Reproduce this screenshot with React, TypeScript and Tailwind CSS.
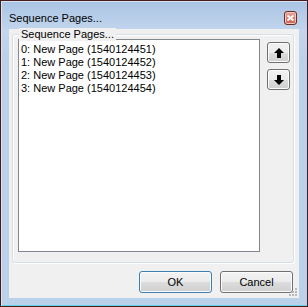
import React from "react";

const pages = [
  "0: New Page (1540124451)",
  "1: New Page (1540124452)",
  "2: New Page (1540124453)",
  "3: New Page (1540124454)",
];

const btn =
  "flex items-center justify-center rounded-[3px] border bg-[linear-gradient(#f2f2f2_0%,#ebebeb_50%,#dddddd_51%,#cfcfcf_100%)] shadow-[inset_0_0_0_1px_#fcfcfc]";

const Arrow = ({ down }: { down?: boolean }) => (
  <svg width="10" height="10" viewBox="0 0 10 10" className={down ? "rotate-180" : ""}>
    <polygon points="5,0 10,5 7,5 7,10 3,10 3,5 0,5" fill="#000" />
  </svg>
);

const SizeGrip = () => (
  <svg width="8" height="8" viewBox="0 0 8 8" className="absolute bottom-[2px] right-[2px]">
    {[
      [6, 0],
      [6, 3],
      [3, 3],
      [6, 6],
      [3, 6],
      [0, 6],
    ].map(([x, y]) => (
      <rect key={`${x}-${y}`} x={x} y={y} width="2" height="2" fill="#b8b8b8" />
    ))}
  </svg>
);

export default function App() {
  return (
    <div className="w-[308px] h-[307px] border border-[#4a1b1b] bg-[linear-gradient(#a9c4e3_0px,#c2d6ed_30px,#bad1ea_60px,#bad1ea_100%)] shadow-[inset_1px_1px_0_#d6e5f5,inset_0_-1px_0_#5fd5ee] flex flex-col font-['Liberation_Sans',Arial,sans-serif] text-[11px] leading-[13px] text-black">
      {/* title bar */}
      <div className="h-[28px] flex items-start pl-[8px] pr-[10px] pt-[11px]">
        <span className="flex-1">Sequence Pages...</span>
        <div className="-mt-[1px] w-[13px] h-[14px] rounded-[3px] border border-[#6e2b24] bg-[linear-gradient(#e6a89c,#c9604f)] shadow-[inset_0_0_0_1px_#f1c6bd] flex items-center justify-center">
          <svg width="7" height="6" viewBox="0 0 7 6">
            <path d="M0.5 0.5 L6.5 5.5 M6.5 0.5 L0.5 5.5" stroke="#fff" strokeWidth="1.8" />
          </svg>
        </div>
      </div>

      {/* client area */}
      <div className="relative mx-[8px] h-[269px] bg-[#f0f0f0] flex flex-col">
        <div className="relative ml-[3px] mt-[5px] w-[282px] h-[229px] rounded-[3px] border border-[#d5dfe5] shadow-[1px_1px_0_#ffffff,inset_1px_1px_0_#ffffff] flex">
          <span className="absolute -top-[7px] left-[6px] px-[2px] bg-[#f0f0f0]">Sequence Pages...</span>
          <div className="ml-[5px] mt-[4px] w-[242px] h-[213px] border border-[#828790] bg-white pl-[2px] pt-[3px]">
            {pages.map((p) => (
              <div key={p} className="h-[13px]">
                {p}
              </div>
            ))}
          </div>
          <div className="ml-[7px] mt-[7px] flex flex-col gap-[6px]">
            <button className={`${btn} w-[23px] h-[21px] border-[#707070]`}>
              <Arrow />
            </button>
            <button className={`${btn} w-[23px] h-[21px] border-[#707070]`}>
              <Arrow down />
            </button>
          </div>
        </div>

        <div className="mt-[8px] flex justify-end gap-[8px] pr-[6px]">
          <button className={`${btn} w-[73px] h-[22px] border-[#3c7fb1] shadow-[inset_0_0_0_1px_#98dcf5]`}>OK</button>
          <button className={`${btn} w-[73px] h-[22px] border-[#707070]`}>Cancel</button>
        </div>
        <SizeGrip />
      </div>
    </div>
  );
}
